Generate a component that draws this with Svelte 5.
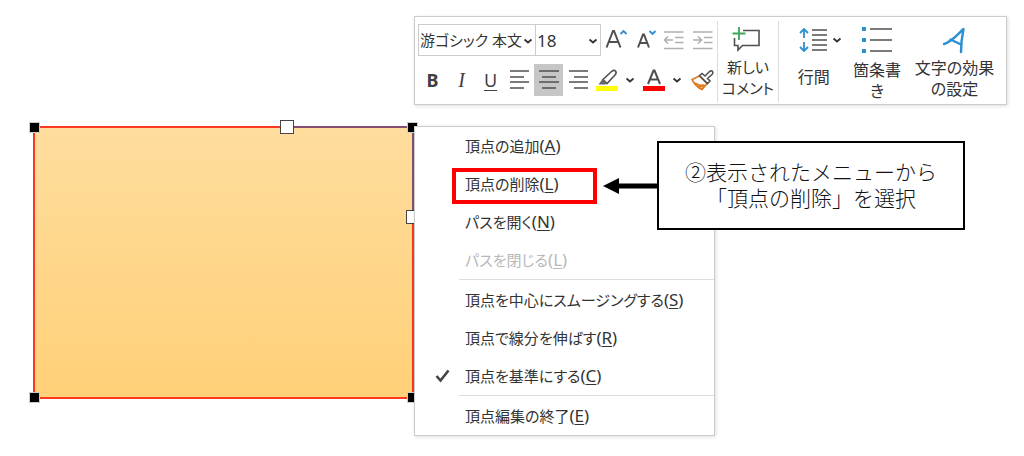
<script>
  const menuGroups = [
    [
      { label: '頂点の追加', key: 'A' },
      { label: '頂点の削除', key: 'L', marked: true },
      { label: 'パスを開く', key: 'N' },
      { label: 'パスを閉じる', key: 'L', disabled: true }
    ],
    [
      { label: '頂点を中心にスムージングする', key: 'S' },
      { label: '頂点で線分を伸ばす', key: 'R' },
      { label: '頂点を基準にする', key: 'C', checked: true }
    ],
    [{ label: '頂点編集の終了', key: 'E' }]
  ];
  const aligns = [
    { name: '左揃え', d: 'M4 6H23M4 12H18M4 17H23M4 23H18' },
    { name: '中央揃え', d: 'M4 6H24M7 12H21M4 17H24M7 23H21', active: true },
    { name: '右揃え', d: 'M5 6H24M10 12H24M5 17H24M10 23H24' }
  ];
</script>

{#snippet chevron()}
  <svg class="chevron" width="10" height="8" viewBox="0 0 10 8" aria-hidden="true"><path d="M1.500 2.500L5 5.500L8.500 2.500" /></svg>
{/snippet}

<main>
  <div class="shape">
    <span class="edge top"></span>
    <span class="edge side"></span>
    <i class="vertex tl"></i>
    <i class="vertex tr"></i>
    <i class="vertex bl"></i>
    <i class="vertex br"></i>
    <i class="mid mt"></i>
    <i class="mid mr"></i>
  </div>

  <div class="panels">
    <div class="toolbar" role="toolbar" aria-label="書式">
      <div class="format">
        <div class="row">
          <div class="field family">
            <select aria-label="フォント"><option>游ゴシック 本文</option></select>
            {@render chevron()}
          </div>
          <div class="field size">
            <select aria-label="フォント サイズ"><option>18</option></select>
            {@render chevron()}
          </div>
          <button class="tool" aria-label="フォント サイズの拡大">
            <svg width="28" height="30" viewBox="0 0 28 30"><path class="ink strong" d="M4.500 22.500L11 6H12L18.500 22.500M6.500 17H16.500" /><path class="blue" d="M18.500 9L21.500 6L24.500 9" /></svg>
          </button>
          <button class="tool" aria-label="フォント サイズの縮小">
            <svg width="28" height="30" viewBox="0 0 28 30"><path class="ink strong" d="M7 22.500L12 9.500H13L18 22.500M8.500 18H16.500" /><path class="blue" d="M18.500 6L21.500 9L24.500 6" /></svg>
          </button>
          <button class="tool" aria-label="インデントを減らす" disabled>
            <svg width="28" height="30" viewBox="0 0 28 30"><path class="pale" d="M4 7H23.500M15 12.500H23.500M15 17.500H23.500M4 23.500H23.500M4.500 15H13M8 11.500L4.500 15L8 18.500" /></svg>
          </button>
          <button class="tool" aria-label="インデントを増やす" disabled>
            <svg width="28" height="30" viewBox="0 0 28 30"><path class="pale" d="M4 7H23.500M15 12.500H23.500M15 17.500H23.500M4 23.500H23.500M4 15H12.500M9 11.500L12.500 15L9 18.500" /></svg>
          </button>
        </div>

        <div class="row">
          <button class="tool letter bold">B</button>
          <button class="tool letter italic">I</button>
          <button class="tool letter under">U</button>
          {#each aligns as a}
            <button class="tool" class:active={a.active} aria-label={a.name}>
              <svg width="28" height="30" viewBox="0 0 28 30"><path class="ink" d={a.d} /></svg>
            </button>
          {/each}
          <button class="tool" aria-label="蛍光ペン">
            <svg width="28" height="30" viewBox="0 0 28 30">
              <rect x="3" y="21" width="22" height="5" fill="#ff0" />
              <path class="ink" fill="#fff" d="M10 14.500L18.500 6.500Q21 4.500 22.500 6Q24 8 22 10L14 18.500Z" />
              <path d="M9.500 14L14.500 18.500L12 19.500H5.500Z" fill="#666" />
            </svg>
          </button>
          <button class="drop" aria-label="蛍光ペンの色">{@render chevron()}</button>
          <button class="tool" aria-label="フォントの色">
            <svg width="28" height="30" viewBox="0 0 28 30">
              <rect x="3" y="21" width="22" height="5" fill="#f00" />
              <path class="ink strong" d="M8 19L13.500 5.500H14.500L20 19M10 14.500H18" />
            </svg>
          </button>
          <button class="drop" aria-label="フォントの色の選択">{@render chevron()}</button>
          <button class="tool brush" aria-label="書式のコピー">
            <svg width="28" height="30" viewBox="0 0 28 30">
              <path d="M4 14.500L11.500 11L19 18.500L14 24.500Q8 22 4 14.500Z" fill="#fff" stroke="#e07a1f" stroke-width="1.600" />
              <path d="M7 18L12 20.500L16 20M10 21.500L14 24L17 20.500Z" fill="#fbc58a" stroke="#e07a1f" stroke-width="1.400" />
              <path class="ink" fill="#fff" d="M11.500 10.500L14 8.500L17 11L21.500 6.500Q23.500 5 24.500 6.500Q25.500 8 24 9.500L19.500 13.500L22 16L19.500 18.500Z" />
            </svg>
          </button>
        </div>
      </div>

      <button class="big comment">
        <svg width="32" height="30" viewBox="0 0 32 30"><path class="ink" d="M11 5.500H27V20.500H10.500L6 25V20.500H2.500V13" /><path d="M7 2V15M0.500 8.500H13.500" stroke="#3fa35b" stroke-width="1.800" fill="none" /></svg>
        <span>新しい<br />コメント</span>
      </button>
      <button class="big spacing">
        <span class="pair">
          <svg width="30" height="30" viewBox="0 0 30 30"><path class="blue" d="M6 4V13M2 8L6 4L10 8M6 17V26M2 22L6 26L10 22" /><path class="ink" d="M14 5H29M14 10H29M14 15H29M14 20H29M14 25H29" /></svg>
          {@render chevron()}
        </span>
        <span>行間</span>
      </button>
      <button class="big bullets">
        <svg width="32" height="30" viewBox="0 0 32 30"><path d="M1 2H5V6H1ZM1 13H5V17H1ZM1 24H5V28H1Z" fill="#2b8fd3" /><path class="ink" d="M9 4H31M9 15H31M9 26H31" /></svg>
        <span>箇条書<br />き</span>
      </button>
      <button class="big effects">
        <svg width="26" height="30" viewBox="0 0 26 30"><path d="M3 19C11 17 17 9 22.500 4Q20 16 20 27M9.500 14.500L20 19.500" stroke="#2b8fd3" stroke-width="2.400" stroke-linecap="round" stroke-linejoin="round" fill="none" /></svg>
        <span>文字の効果<br />の設定</span>
      </button>
    </div>

    <div class="stage">
      <div class="menu" role="menu">
        {#each menuGroups as group}
          <div class="group" role="group">
            {#each group as item}
              <button class="item" class:marked={item.marked} role="menuitem" disabled={item.disabled}>
                <span class="tick">
                  {#if item.checked}
                    <svg width="16" height="14" viewBox="0 0 16 14"><path d="M1.500 7L5.500 11.500L13.500 1.500" fill="none" stroke="#444" stroke-width="2.600" /></svg>
                  {/if}
                </span>
                <span>{item.label}<span class="key">(<u>{item.key}</u>)</span></span>
              </button>
            {/each}
          </div>
        {/each}
      </div>
      <div class="note">
        <svg width="54" height="16" viewBox="0 0 54 16" aria-hidden="true"><path d="M0 8L16 0V5.500H54V10.500H16V16Z" /></svg>
        <p>②表示されたメニューから<br />「頂点の削除」を選択</p>
      </div>
    </div>
  </div>
</main>

<style>
  :global(body) { margin: 0; background: #fff; }
  main {
    display: grid;
    grid-template-columns: minmax(0, 381fr) minmax(0, 593fr);
    padding: 16px 17px 20px 33px;
    font-family: "Noto Sans", "Noto Sans CJK JP", sans-serif;
    color: #333;
  }
  button, select { font: inherit; color: inherit; background: none; border: 0; padding: 0; margin: 0; }
  button { display: flex; align-items: center; justify-content: center; }
  svg { display: block; flex: none; }
  .ink { stroke: #505050; stroke-width: 1.6; }
  .ink:not([fill]) { fill: none; }
  .strong { stroke-width: 2; }
  .blue { stroke: #2b8fd3; stroke-width: 1.8; fill: none; }
  .pale { stroke: #b0b0b0; stroke-width: 1.6; fill: none; }
  .chevron path { fill: none; stroke: #333; stroke-width: 1.8; }

  .shape {
    position: relative;
    margin: 110px 0 37px;
    box-sizing: border-box;
    border: 2px solid #f73a20;
    background: linear-gradient(#ffdd9e, #ffd077);
  }
  .edge { position: absolute; background: #855070; }
  .top { top: -2px; left: 253px; right: -2px; height: 2px; }
  .side { top: -2px; right: -2px; width: 2px; height: 90px; }
  .vertex { position: absolute; width: 9px; height: 9px; background: #000; outline: 1px solid #ccc; }
  .tl, .tr { top: -5px; }
  .bl, .br { bottom: -5px; }
  .tl, .bl { left: -5px; }
  .tr, .br { right: -5px; }
  .mid { position: absolute; box-sizing: border-box; width: 14px; height: 14px; border: 1px solid #444; background: #fff; }
  .mt { top: -8px; left: 65%; }
  .mr { right: -8px; top: 82px; }

  .panels { display: flex; flex-direction: column; gap: 21px; position: relative; }
  .toolbar {
    display: flex;
    box-sizing: border-box;
    padding: 4px 3px 2px;
    border: 1px solid #ccc;
    background: #fff;
    box-shadow: 1px 1px 4px #0002;
  }
  .format { flex: 0 0 299px; display: flex; flex-direction: column; gap: 8px; padding-top: 3px; }
  .row { display: flex; height: 32px; }
  .field { position: relative; box-sizing: border-box; border: 1px solid #ccc; }
  .family { width: 118px; }
  .size { width: 66px; margin-left: -1px; }
  .field select {
    appearance: none;
    width: 100%;
    height: 100%;
    padding-left: 1px;
    font-size: 15px;
    font-feature-settings: "palt";
  }
  .size select { font-size: 17px; }
  .field .chevron { position: absolute; right: 2px; top: 12px; pointer-events: none; }
  .tool { width: 29px; height: 32px; }
  .active { background: #c6c6c6; }
  .drop { width: 18px; }
  .brush { flex: 1; }
  .letter { font-size: 18px; color: #404040; }
  .bold { font-weight: 700; }
  .italic { font-family: "Liberation Serif", serif; font-style: italic; font-size: 20px; }
  .under { text-decoration: underline; text-underline-offset: 3px; }

  .big {
    flex-direction: column;
    justify-content: flex-start;
    gap: 3px;
    padding-top: 4px;
    font-size: 16px;
    line-height: 21px;
    font-feature-settings: "palt";
    white-space: nowrap;
  }
  .comment { flex: 0 0 62px; border: solid #ddd; border-width: 0 1px; font-size: 15px; gap: 2px; }
  .spacing { flex: 70 0 0; gap: 12px; }
  .bullets { flex: 58 0 0; gap: 5px; }
  .effects { flex: 98 0 0; }
  .pair { display: flex; align-items: center; gap: 4px; padding-left: 12px; }

  .stage { position: relative; }
  .menu {
    box-sizing: border-box;
    width: 301px;
    border: 1px solid #ccc;
    background: #fff;
    box-shadow: 1px 1px 4px #0002;
  }
  .group + .group { position: relative; padding-top: 2px; }
  .group + .group::before { content: ""; position: absolute; top: 0; left: 44px; right: 0; height: 1px; background: #ddd; }
  .item {
    position: relative;
    width: 100%;
    height: 38px;
    padding-bottom: 1px;
    justify-content: flex-start;
    font-size: 15px;
    font-feature-settings: "palt";
    white-space: nowrap;
  }
  .item:disabled { color: #b8b8b8; }
  .item u { text-underline-offset: 2px; }
  .key { font-size: 17px; }
  .tick { width: 30px; padding-left: 20px; }
  .marked::after {
    content: "";
    position: absolute;
    box-sizing: border-box;
    left: 37px;
    top: 3px;
    width: 145px;
    height: 36px;
    border: 4px solid #f00;
  }
  .note { position: absolute; left: 189px; top: 15px; display: flex; align-items: center; }
  .note p {
    box-sizing: border-box;
    width: 308px;
    margin: 0;
    padding: 15px 0 18px;
    border: 2px solid #000;
    background: #fff;
    color: #111;
    font-family: "Noto Sans CJK JP", sans-serif;
    font-weight: 300;
    font-size: 21px;
    line-height: 26px;
    text-align: center;
  }
</style>
